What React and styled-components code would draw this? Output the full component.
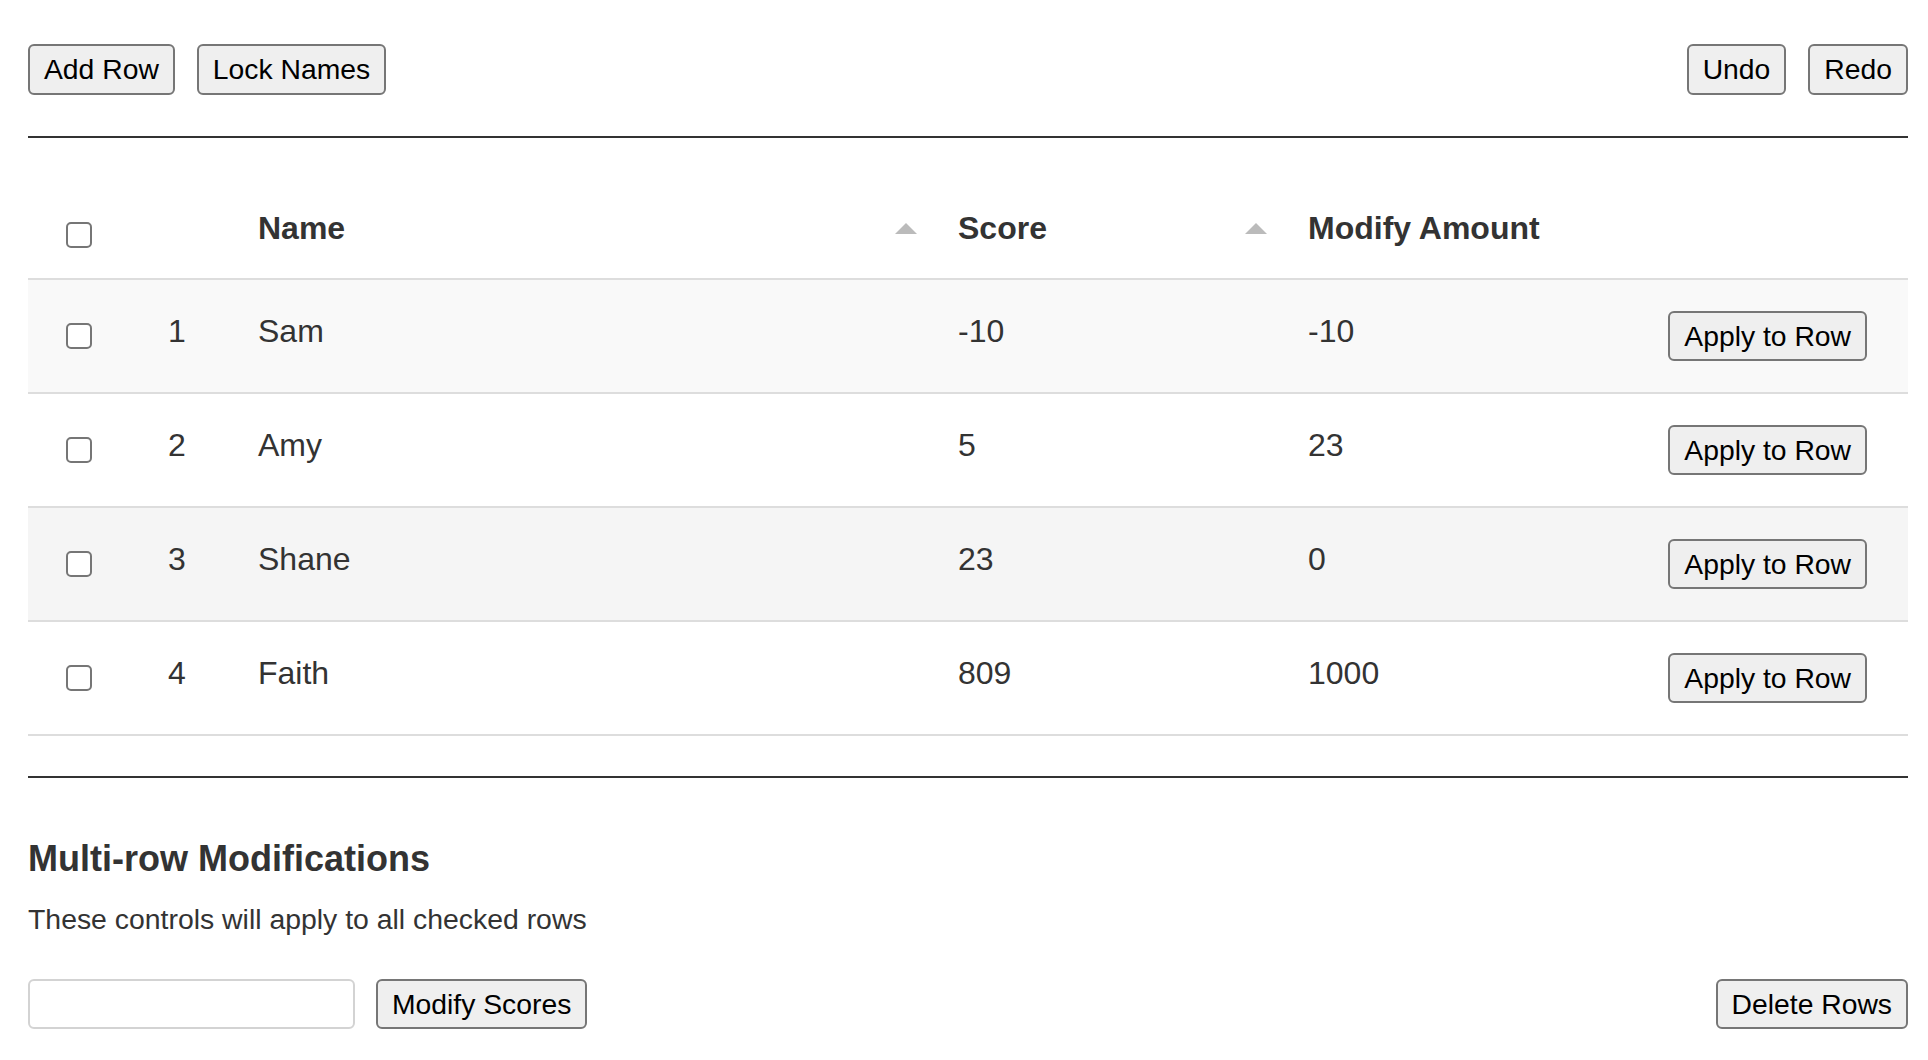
import React, { useState } from 'react'
import styled, { createGlobalStyle } from 'styled-components'

const GlobalStyle = createGlobalStyle`
  html, body {
    margin: 0;
    padding: 0;
    background: #fff;
  }
  body {
    font-family: "Liberation Sans", Arial, Helvetica, sans-serif;
    color: #333;
  }
`

const initialRows = [
  { id: 1, name: 'Sam', score: -10, amount: -10 },
  { id: 2, name: 'Amy', score: 5, amount: 23 },
  { id: 3, name: 'Shane', score: 23, amount: 0 },
  { id: 4, name: 'Faith', score: 809, amount: 1000 },
]

const Page = styled.main`
  padding: 44px 20px 0 28px;
`

const Toolbar = styled.div`
  display: flex;
  justify-content: space-between;
  align-items: center;
`

const ButtonGroup = styled.div`
  display: flex;
  gap: 22px;
`

const Button = styled.button`
  height: ${p => (p.$tall ? '51px' : '50px')};
  padding: 0 14px;
  border: 2px solid #767676;
  border-radius: 6px;
  background: #efefef;
  color: #000;
  font-family: "Liberation Sans", Arial, Helvetica, sans-serif;
  font-size: 28.3px;
  line-height: 1;
  cursor: pointer;
  white-space: nowrap;
`

const Rule = styled.hr`
  height: 2px;
  margin: ${p => p.$top}px 0 0;
  border: 0;
  background: #333;
`

const Table = styled.div`
  margin-top: 40px;
`

const cols = '102px 112px 700px 350px 1fr 1fr'

const HeaderRow = styled.div`
  display: grid;
  grid-template-columns: ${cols};
  align-items: center;
  height: 87px;
  padding-top: 13px;
  border-bottom: 2px solid #ddd;
`

const Row = styled.div`
  display: grid;
  grid-template-columns: ${cols};
  align-items: center;
  height: 112px;
  border-bottom: 2px solid #ddd;
  background: ${p => (p.$hover ? '#f5f5f5' : p.$odd ? '#f9f9f9' : '#fff')};
`

const CheckCell = styled.div`
  display: flex;
  justify-content: center;
`

const Check = styled.input.attrs({ type: 'checkbox' })`
  appearance: none;
  width: 26px;
  height: 26px;
  margin: 0;
  border: 2px solid #767676;
  border-radius: 5px;
  background: #fff;
  cursor: pointer;
  &:checked {
    background: #0075ff;
    border-color: #0075ff;
  }
`

const HeadCell = styled.div`
  display: flex;
  align-items: center;
  justify-content: space-between;
  padding: 0 25px 0 16px;
  margin-bottom: 13px;
  font-size: 32px;
  font-weight: bold;
  line-height: 40px;
  color: #333;
`

const Cell = styled.div`
  padding: 0 16px 11px;
  font-size: 32px;
  line-height: 40px;
  color: #333;
`

const IndexCell = styled(Cell)`
  padding: 0 18px 11px 0;
  text-align: center;
`

const ActionCell = styled.div`
  display: flex;
  justify-content: flex-end;
  padding-right: 41px;
`

const SortArrow = () => (
  <svg width="22" height="11" viewBox="0 0 22 11" aria-hidden="true">
    <polygon points="11,0 22,11 0,11" fill="#bbb" />
  </svg>
)

const Heading = styled.h3`
  margin: 60px 0 0;
  font-size: 36px;
  line-height: 41px;
  font-weight: bold;
  color: #333;
`

const Note = styled.p`
  margin: 24px 0 0;
  font-size: 28.4px;
  line-height: 32px;
  color: #333;
`

const Controls = styled.div`
  display: flex;
  align-items: center;
  justify-content: space-between;
  margin-top: 44px;
`

const InputGroup = styled.div`
  display: flex;
  align-items: center;
  gap: 21px;
`

const AmountInput = styled.input`
  box-sizing: border-box;
  width: 327px;
  height: 50px;
  padding: 0 12px;
  border: 2px solid #d3d3d3;
  border-radius: 6px;
  font-family: "Liberation Sans", Arial, sans-serif;
  font-size: 28px;
  outline: none;
`

export default function App() {
  const [rows] = useState(initialRows)
  const [hover, setHover] = useState(3)
  const [checked, setChecked] = useState({})

  const toggle = id => setChecked(c => ({ ...c, [id]: !c[id] }))

  return (
    <>
      <GlobalStyle />
      <Page>
        <Toolbar>
          <ButtonGroup>
            <Button $tall>Add Row</Button>
            <Button $tall>Lock Names</Button>
          </ButtonGroup>
          <ButtonGroup>
            <Button $tall>Undo</Button>
            <Button $tall>Redo</Button>
          </ButtonGroup>
        </Toolbar>

        <Rule $top={41} />

        <Table role="table">
          <HeaderRow role="row">
            <CheckCell>
              <Check />
            </CheckCell>
            <div />
            <HeadCell>
              Name
              <SortArrow />
            </HeadCell>
            <HeadCell>
              Score
              <SortArrow />
            </HeadCell>
            <HeadCell>Modify Amount</HeadCell>
            <div />
          </HeaderRow>
          {rows.map((r, i) => (
            <Row
              key={r.id}
              role="row"
              $odd={i % 2 === 0}
              $hover={hover === r.id}
              onMouseEnter={() => setHover(r.id)}
            >
              <CheckCell>
                <Check checked={!!checked[r.id]} onChange={() => toggle(r.id)} />
              </CheckCell>
              <IndexCell>{r.id}</IndexCell>
              <Cell>{r.name}</Cell>
              <Cell>{r.score}</Cell>
              <Cell>{r.amount}</Cell>
              <ActionCell>
                <Button>Apply to Row</Button>
              </ActionCell>
            </Row>
          ))}
        </Table>

        <Rule $top={40} />

        <Heading>Multi-row Modifications</Heading>
        <Note>These controls will apply to all checked rows</Note>

        <Controls>
          <InputGroup>
            <AmountInput type="text" />
            <Button>Modify Scores</Button>
          </InputGroup>
          <Button>Delete Rows</Button>
        </Controls>
      </Page>
    </>
  )
}
